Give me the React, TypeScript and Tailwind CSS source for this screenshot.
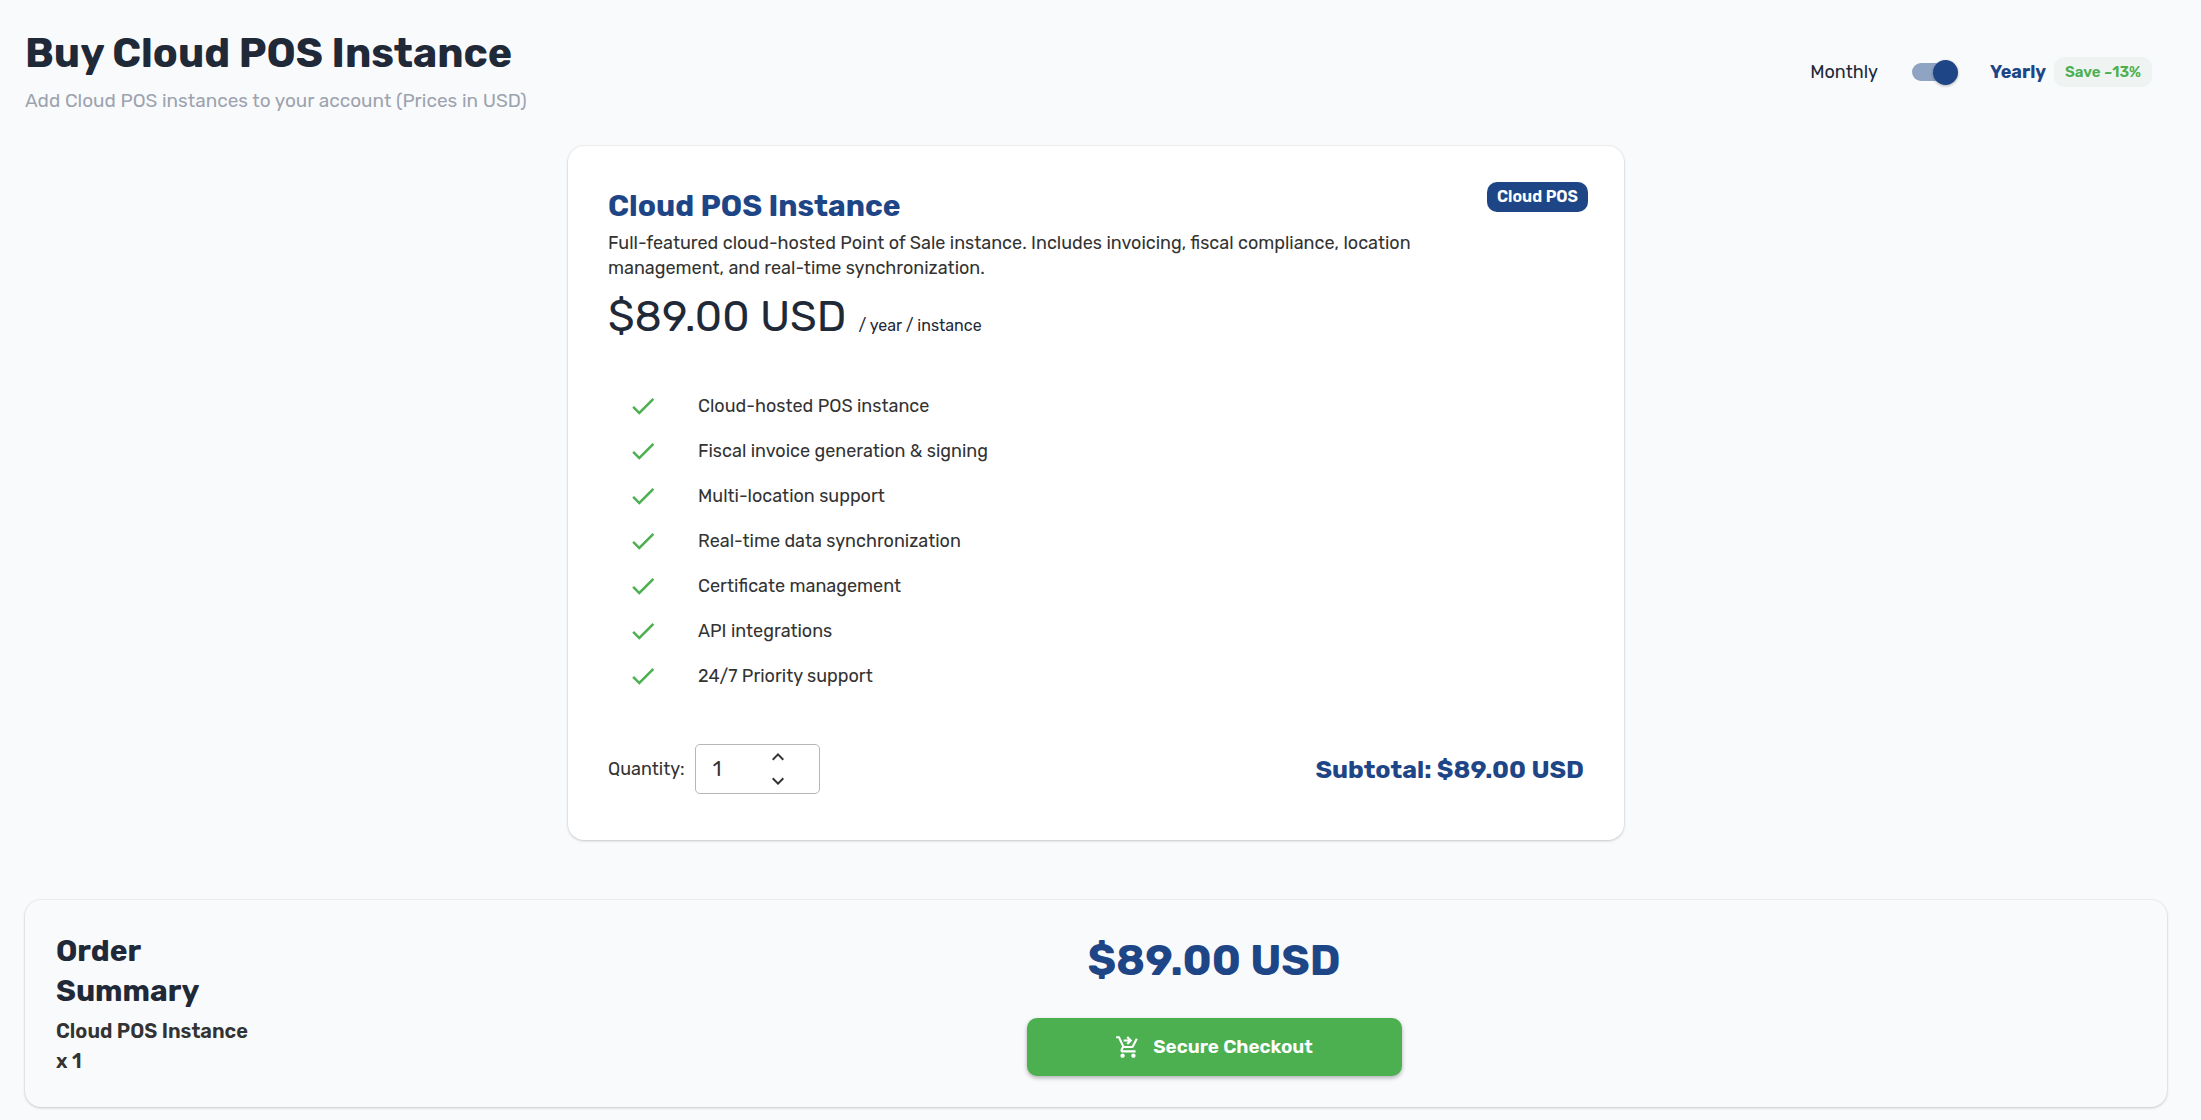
import React, { useState } from 'react';
import { MdCheck, MdKeyboardArrowDown, MdKeyboardArrowUp, MdShoppingCartCheckout } from 'react-icons/md';

const YEARLY_PRICE = 89;
const MONTHLY_PRICE = 8.5;

const features = [
  'Cloud-hosted POS instance',
  'Fiscal invoice generation & signing',
  'Multi-location support',
  'Real-time data synchronization',
  'Certificate management',
  'API integrations',
  '24/7 Priority support',
];

const formatPrice = (value: number) => `$${value.toFixed(2)} USD`;

type BillingToggleProps = {
  yearly: boolean;
  onChange: (yearly: boolean) => void;
};

function BillingToggle({ yearly, onChange }: BillingToggleProps) {
  return (
    <div className="flex items-center pr-[15px] text-lg leading-[26px]">
      <span className={yearly ? '' : 'font-bold text-[#1e4687]'}>Monthly</span>
      <label className="mr-8 ml-[34px] flex cursor-pointer items-center">
        <input
          type="checkbox"
          role="switch"
          aria-label="Yearly billing"
          className="peer sr-only"
          checked={yearly}
          onChange={(e) => onChange(e.target.checked)}
        />
        <span className="flex h-[18px] w-[46px] items-center rounded-full bg-linear-to-r from-[#8fa3c3] from-90% to-transparent to-90% peer-checked:justify-end">
          <span className="size-[25px] rounded-full bg-[#1e4687] shadow-[0_1px_3px_rgba(0,0,0,0.3)]" />
        </span>
      </label>
      <span className={yearly ? 'font-bold text-[#1e4687]' : ''}>Yearly</span>
      <span className="ml-2 rounded-[10px] bg-[#eff4f2] px-[11px] text-[15px] leading-[30px] font-semibold text-[#4caf50]">
        Save ~13%
      </span>
    </div>
  );
}

type QuantityFieldProps = {
  quantity: number;
  onChange: (quantity: number) => void;
};

function QuantityField({ quantity, onChange }: QuantityFieldProps) {
  return (
    <div className="flex items-center gap-[10px]">
      <label htmlFor="quantity">Quantity:</label>
      <div className="flex w-[125px] rounded-[5px] border border-[#b4b6b9]">
        <input
          id="quantity"
          type="number"
          min={1}
          className="h-12 w-[70px] appearance-none bg-transparent pl-[17px] text-xl outline-none [&::-webkit-inner-spin-button]:appearance-none"
          value={quantity}
          onChange={(e) => onChange(Math.max(1, Number(e.target.value)))}
        />
        <div className="flex flex-col">
          <button type="button" aria-label="Increase quantity" onClick={() => onChange(quantity + 1)}>
            <MdKeyboardArrowUp className="size-6" />
          </button>
          <button type="button" aria-label="Decrease quantity" onClick={() => onChange(Math.max(1, quantity - 1))}>
            <MdKeyboardArrowDown className="size-6" />
          </button>
        </div>
      </div>
    </div>
  );
}

function App() {
  const [yearly, setYearly] = useState(true);
  const [quantity, setQuantity] = useState(1);

  const price = yearly ? YEARLY_PRICE : MONTHLY_PRICE;
  const total = formatPrice(price * quantity);

  return (
    <div className="min-h-screen bg-[#f9fafc] pt-7 pr-[34px] pb-3 pl-[25px] font-[Rubik,Inter,sans-serif] text-[#333333]">
      <header className="mb-[30px] flex items-center justify-between text-[#1f2937]">
        <div>
          <h1 className="text-[41px] leading-[50px] font-bold">Buy Cloud POS Instance</h1>
          <p className="mt-2 text-[19px] leading-[30px] text-[#9ca3af]">
            Add Cloud POS instances to your account (Prices in USD)
          </p>
        </div>
        <BillingToggle yearly={yearly} onChange={setYearly} />
      </header>

      <section className="relative mx-auto w-full max-w-[1056px] rounded-2xl bg-white px-10 pt-10 pb-[46px] text-lg leading-[25px] shadow-[0_0_0_1px_rgba(0,0,0,0.03),0_1px_3px_rgba(0,0,0,0.18)]">
        <span className="absolute top-9 right-9 rounded-[10px] bg-[#1e4687] px-[10px] text-base leading-[30px] font-semibold text-white">
          Cloud POS
        </span>
        <h2 className="text-3xl leading-10 font-bold text-[#1e4687]">Cloud POS Instance</h2>
        <p className="mt-[5px] max-w-[840px]">
          Full-featured cloud-hosted Point of Sale instance. Includes invoicing, fiscal compliance, location
          management, and real-time synchronization.
        </p>
        <p className="mt-[11px] flex items-baseline gap-3 text-[#1f2937]">
          <span className="text-[43px] leading-[50px]">{formatPrice(price)}</span>
          <span className="text-base">{`/ ${yearly ? 'year' : 'month'} / instance`}</span>
        </p>

        <ul className="mt-[41px] pl-5">
          {features.map((feature) => (
            <li key={feature} className="flex h-[45px] items-center gap-10">
              <MdCheck className="size-[30px] text-[#4caf50]" />
              <span className="pt-px">{feature}</span>
            </li>
          ))}
        </ul>

        <div className="mt-[46px] flex items-center justify-between">
          <QuantityField quantity={quantity} onChange={setQuantity} />
          <p className="text-[25px] font-bold text-[#1e4687]">{`Subtotal: ${total}`}</p>
        </div>
      </section>

      <section className="mt-[60px] flex gap-9 rounded-2xl bg-[#f9fafc] px-[31px] py-[31px] shadow-[0_0_0_1px_rgba(0,0,0,0.03),0_1px_3px_rgba(0,0,0,0.18)]">
        <div className="w-[200px]">
          <h2 className="text-3xl leading-10 font-bold text-[#1f2937]">Order Summary</h2>
          <p className="mt-[5px] text-xl leading-[30px] font-semibold">{`Cloud POS Instance x ${quantity}`}</p>
        </div>
        <div className="flex flex-1 flex-col items-center">
          <p className="text-[43px] leading-[60px] font-bold text-[#1e4687]">{total}</p>
          <button
            type="button"
            className="mt-[27px] flex h-[58px] w-[375px] items-center justify-center gap-3 rounded-[10px] bg-[#4caf50] text-[19px] font-semibold text-white shadow-[0_2px_4px_rgba(0,0,0,0.3)]"
          >
            <MdShoppingCartCheckout className="size-[26px]" />
            Secure Checkout
          </button>
        </div>
      </section>
    </div>
  );
}

export default App;
